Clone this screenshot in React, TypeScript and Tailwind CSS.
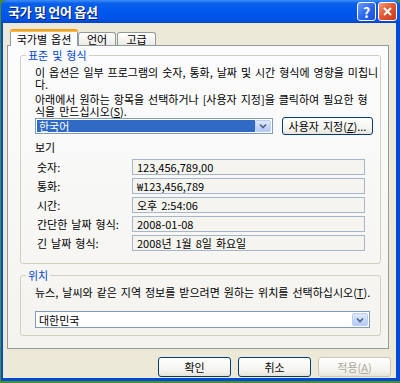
import React from 'react';

const fieldRows = [
  { label: '숫자:', value: '123,456,789,00' },
  { label: '통화:', value: '₩123,456,789' },
  { label: '시간:', value: '오후 2:54:06' },
  { label: '간단한 날짜 형식:', value: '2008-01-08' },
  { label: '긴 날짜 형식:', value: '2008년 1월 8일 화요일' },
];

function ComboArrow() {
  return (
    <div className="w-[16px] h-full rounded-[2px] border border-[#B9CDF6] bg-[linear-gradient(to_bottom,#E0E9FD,#B3C8F5)] flex items-center justify-center">
      <svg width="8" height="6" viewBox="0 0 8 6">
        <path d="M1 1.5 L4 4.5 L7 1.5" fill="none" stroke="#4D6185" strokeWidth="1.6" />
      </svg>
    </div>
  );
}

function XpButton({ children, disabled, className }: { children: React.ReactNode; disabled?: boolean; className?: string }) {
  return (
    <div
      className={
        'flex items-center justify-center rounded-[3px] border text-[11px] leading-none bg-[linear-gradient(to_bottom,#FFFFFF,#F4F3EE_70%,#E6E4DA)] ' +
        (disabled ? 'border-[#C9C7BA] text-[#ACA899] ' : 'border-[#003C74] text-black ') +
        (className ?? '')
      }
    >
      {children}
    </div>
  );
}

export default function App() {
  return (
    <div className="w-[400px] h-[383px] bg-[#4B8F2A] overflow-hidden font-['Noto_Sans_CJK_KR',sans-serif]">
      <div className="ml-[1px] w-[399px] h-[381px] flex flex-col rounded-t-[6px] bg-[#0049DA] overflow-hidden">
        {/* Title bar */}
        <div className="h-[23px] flex items-center bg-[linear-gradient(to_bottom,#3E8EF8_0%,#0A5FEA_15%,#0058EE_50%,#0053E4_85%,#0044CA_100%)]">
          <span className="ml-[7px] text-white font-bold text-[13px] leading-none tracking-[-0.3px] [text-shadow:1px_1px_0_#0A1C6E]">
            국가 및 언어 옵션
          </span>
          <div className="ml-auto mr-[3px] flex gap-[2px]">
            <div className="w-[19px] h-[19px] rounded-[3px] border border-white bg-[linear-gradient(135deg,#6FA0F8,#2A63EC_55%,#1C4FD8)] flex items-center justify-center text-white font-bold text-[14px] leading-none">
              ?
            </div>
            <div className="w-[19px] h-[19px] rounded-[3px] border border-white bg-[linear-gradient(135deg,#F19A7A,#E0562E_50%,#C6391A)] flex items-center justify-center">
              <svg width="11" height="11" viewBox="0 0 11 11">
                <path d="M2 2 L9 9 M9 2 L2 9" stroke="white" strokeWidth="2" />
              </svg>
            </div>
          </div>
        </div>

        {/* Client area */}
        <div className="ml-[2px] mr-[4px] mb-[3px] flex-1 bg-[#ECE9D8] flex flex-col text-[11px] leading-[12px] text-black [word-spacing:1.5px]">
          {/* Tabs */}
          <div className="mt-[6px] ml-[7px] h-[16px] flex items-end">
            <div className="relative z-10 w-[68px] h-[17px] -mb-[1px] rounded-t-[3px] border-x border-[#919B9C] bg-[#FCFCFE] flex flex-col">
              <div className="h-[3px] -mx-px rounded-t-[3px] bg-[linear-gradient(to_bottom,#E68B2C,#FFC73C)]" />
              <div className="flex-1 flex items-center justify-center">국가별 옵션</div>
            </div>
            <div className="w-[38px] h-[13px] rounded-t-[3px] border-x border-t border-[#919B9C] bg-[linear-gradient(to_bottom,#FFFFFF,#ECEBE6)] flex items-center justify-center">
              언어
            </div>
            <div className="ml-[1px] w-[39px] h-[13px] rounded-t-[3px] border-x border-t border-[#919B9C] bg-[linear-gradient(to_bottom,#FFFFFF,#ECEBE6)] flex items-center justify-center">
              고급
            </div>
          </div>

          {/* Tab panel */}
          <div className="ml-[4px] w-[382px] h-[304px] border border-[#919B9C] bg-[linear-gradient(to_bottom,#FCFCFE,#F4F3EE)] flex flex-col">
            {/* 표준 및 형식 */}
            <fieldset className="mt-[3px] ml-[12px] w-[361px] rounded-[3px] border border-[#D0D0BF] pl-[14px] pb-[12px]">
              <legend className="-ml-[9px] px-[2px] text-[#0046D5] leading-[12px]">표준 및 형식</legend>
              <div className="mt-[5px] whitespace-nowrap">이 옵션은 일부 프로그램의 숫자, 통화, 날짜 및 시간 형식에 영향을 미칩니</div>
              <div className="whitespace-nowrap">다.</div>
              <div className="mt-[3px] whitespace-nowrap">아래에서 원하는 항목을 선택하거나 [사용자 지정]을 클릭하여 필요한 형</div>
              <div className="whitespace-nowrap">
                식을 만드십시오(<span className="underline">S</span>).
              </div>
              <div className="h-[18px] flex items-center">
                <div className="w-[238px] h-[16px] border border-[#7F9DB9] bg-white flex p-[1px]">
                  <div className="flex-1 bg-[#316AC5] text-white flex items-center pl-[2px]">한국어</div>
                  <ComboArrow />
                </div>
                <XpButton className="ml-[9px] w-[91px] h-[18px]">
                  사용자 지정(<span className="underline">Z</span>)...
                </XpButton>
              </div>
              <div className="mt-[6px]">보기</div>
              <div className="mt-[6px] flex flex-col gap-[3px]">
                {fieldRows.map((r) => (
                  <div key={r.label} className="h-[16px] flex items-center">
                    <div className="ml-[2px] w-[95px] whitespace-nowrap">{r.label}</div>
                    <div className="w-[233px] h-[16px] border border-[#A5B5CB] bg-[#F5F4EF] flex items-center pl-[4px] whitespace-nowrap">
                      {r.value}
                    </div>
                  </div>
                ))}
              </div>
            </fieldset>

            {/* 위치 */}
            <fieldset className="mt-[5px] ml-[12px] w-[361px] rounded-[3px] border border-[#D0D0BF] pl-[14px] pb-[7px]">
              <legend className="-ml-[9px] px-[2px] text-[#0046D5] leading-[12px]">위치</legend>
              <div className="mt-[5px] whitespace-nowrap">
                뉴스, 날씨와 같은 지역 정보를 받으려면 원하는 위치를 선택하십시오(<span className="underline">T</span>).
              </div>
              <div className="mt-[13px] w-[335px] h-[17px] border border-[#7F9DB9] bg-white flex p-[1px]">
                <div className="flex-1 flex items-center pl-[2px]">대한민국</div>
                <ComboArrow />
              </div>
            </fieldset>
          </div>

          {/* Buttons */}
          <div className="mt-[8px] flex justify-end gap-[7px] pr-[5px]">
            <XpButton className="w-[73px] h-[20px]">확인</XpButton>
            <XpButton className="w-[73px] h-[20px]">취소</XpButton>
            <XpButton disabled className="w-[73px] h-[20px]">
              적용(<span className="underline">A</span>)
            </XpButton>
          </div>
        </div>
      </div>
    </div>
  );
}
